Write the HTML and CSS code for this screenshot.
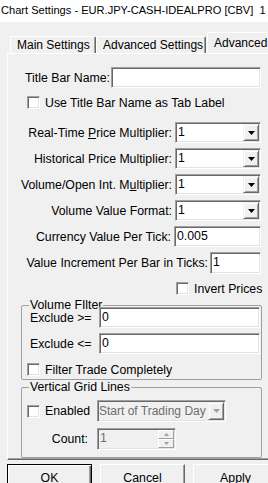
FILE: index.html
```html
<!DOCTYPE html>
<html lang="en">
<head>
    <meta charset="UTF-8">
    <meta name="viewport" content="width=device-width, initial-scale=1.0">
    <title>Chart Settings</title>
    <link rel="stylesheet" href="styles.css">
</head>
<body>
    <div class="titlebar">Chart Settings - EUR.JPY-CASH-IDEALPRO [CBV]&nbsp; 1</div>

    <div class="tabs">
        <div class="tab tab-main">Main Settings</div>
        <div class="tab tab-adv">Advanced Settings</div>
        <div class="tab active">Advanced</div>
    </div>

    <div class="panel">
        <div class="row r-title">
            <label>Title Bar Name:</label>
            <div class="edit w-title"></div>
        </div>
        <div class="check c-tab"><span class="box"></span>Use Title Bar Name as Tab Label</div>

        <div class="row r-first">
            <label>Real-Time <u>P</u>rice Multiplier:</label>
            <div class="combo"><span class="val">1</span><span class="drop"><svg width="7" height="4" viewBox="0 0 7 4"><polygon points="0,0 7,0 3.5,4"/></svg></span></div>
        </div>
        <div class="row">
            <label>Historical Price Multiplier:</label>
            <div class="combo"><span class="val">1</span><span class="drop"><svg width="7" height="4" viewBox="0 0 7 4"><polygon points="0,0 7,0 3.5,4"/></svg></span></div>
        </div>
        <div class="row">
            <label>Volume/Open Int. M<u>u</u>ltiplier:</label>
            <div class="combo"><span class="val">1</span><span class="drop"><svg width="7" height="4" viewBox="0 0 7 4"><polygon points="0,0 7,0 3.5,4"/></svg></span></div>
        </div>
        <div class="row">
            <label>Volume Value Format:</label>
            <div class="combo"><span class="val">1</span><span class="drop"><svg width="7" height="4" viewBox="0 0 7 4"><polygon points="0,0 7,0 3.5,4"/></svg></span></div>
        </div>
        <div class="row">
            <label>Currency Value Per Tick:</label>
            <div class="edit w-tick">0.005</div>
        </div>
        <div class="row r-incr">
            <label>Value Increment Per Bar in Ticks:</label>
            <div class="edit w-incr">1</div>
        </div>
        <div class="check c-invert"><span class="box"></span>Invert Prices</div>

        <fieldset class="group g-volume">
            <legend>Volume FIlter</legend>
            <div class="frow f-first">
                <label class="flabel">Exclude &gt;=</label>
                <div class="edit w-excl">0</div>
            </div>
            <div class="frow">
                <label class="flabel">Exclude &lt;=</label>
                <div class="edit w-excl">0</div>
            </div>
            <div class="check c-filter"><span class="box"></span>Filter Trade Completely</div>
        </fieldset>

        <fieldset class="group g-grid">
            <legend>Vertical Grid Lines</legend>
            <div class="frow f-enabled">
                <span class="box"></span>
                <span class="enabled-label">Enabled</span>
                <div class="combo disabled w-start"><span class="val">Start of Trading Day</span><span class="drop"><svg width="7" height="4" viewBox="0 0 7 4"><polygon points="0,0 7,0 3.5,4"/></svg></span></div>
            </div>
            <div class="frow f-count">
                <label class="count-label">Count:</label>
                <div class="spin">
                    <span class="val">1</span>
                    <span class="spin-btns">
                        <span class="spin-btn"><svg width="5" height="3" viewBox="0 0 5 3"><polygon points="2.5,0 5,3 0,3"/></svg></span>
                        <span class="spin-btn"><svg width="5" height="3" viewBox="0 0 5 3"><polygon points="0,0 5,0 2.5,3"/></svg></span>
                    </span>
                </div>
            </div>
        </fieldset>
    </div>

    <div class="buttons">
        <button class="default">OK</button>
        <button>Cancel</button>
        <button>Apply</button>
    </div>
</body>
</html>
```

FILE: styles.css
```css
body {
    margin: 0;
    background: #f0f0f0;
    font-family: "Liberation Sans", Arial, sans-serif;
    font-size: 12px;
    color: #000;
    overflow: hidden;
}
.titlebar {
    height: 22px;
    line-height: 20px;
    padding-left: 1px;
    font-size: 11.1px;
    background: #fff;
    white-space: nowrap;
}

/* tab strip */
.tabs {
    display: flex;
    align-items: flex-end;
    height: 31px;
    padding-left: 10px;
    white-space: nowrap;
    overflow: hidden;
}
.tab {
    box-sizing: border-box;
    height: 17px;
    line-height: 16px;
    padding-left: 6px;
    border-top: 1px solid #fff;
    border-left: 1px solid #fff;
    border-right: 1px solid #696969;
    box-shadow: inset -1px 0 #a0a0a0;
    border-radius: 2px 2px 0 0;
}
.tab-main {
    width: 86px;
}
.tab-adv {
    width: 110px;
}
.tab.active {
    position: relative;
    flex: 1;
    height: 22px;
    line-height: 20px;
    margin-left: 1px;
    margin-bottom: -1px;
    padding-left: 6px;
    border-right: none;
    box-shadow: none;
    background: #f0f0f0;
}

/* page of the tab */
.panel {
    margin-left: 7px;
    padding-top: 13px;
    padding-bottom: 1px;
    font-size: 12.3px;
    border-top: 1px solid #fff;
    border-left: 1px solid #fff;
    border-bottom: 1px solid #696969;
    box-shadow: inset 0 -1px #a0a0a0;
}
.row {
    display: flex;
    align-items: center;
    justify-content: flex-end;
    height: 21px;
    margin-top: 5px;
    padding-right: 7px;
}
.row label {
    margin-right: 3px;
    white-space: nowrap;
}
.r-title {
    margin-top: 0;
}
.r-title label {
    margin-right: 1px;
}
.r-first {
    margin-top: 13px;
}
.r-incr {
    height: 22px;
}
.r-incr label {
    margin-right: 2px;
}

/* sunken controls */
.edit, .combo, .spin, .box {
    box-sizing: border-box;
    background: #fff;
    border: 1px solid;
    border-color: #a0a0a0 #fff #fff #a0a0a0;
    box-shadow: inset 1px 1px #696969, inset -1px -1px #e3e3e3;
}
.edit {
    height: 100%;
    line-height: 19px;
    padding-left: 2px;
}
.w-title {
    width: 150px;
}
.w-tick {
    width: 87px;
}
.w-incr {
    width: 51px;
}
.w-excl {
    width: 161px;
    height: 21px;
}
.combo {
    display: flex;
    width: 86px;
    height: 100%;
}
.combo .val, .spin .val {
    flex: 1;
    line-height: 19px;
    padding-left: 2px;
    white-space: nowrap;
    overflow: hidden;
}
.drop {
    box-sizing: border-box;
    display: flex;
    align-items: center;
    justify-content: center;
    width: 16px;
    margin: 1px;
    background: #f0f0f0;
    border: 1px solid;
    border-color: #f0f0f0 #696969 #696969 #f0f0f0;
    box-shadow: inset 1px 1px #fff, inset -1px -1px #a0a0a0;
}
.drop svg {
    fill: #000;
}
.combo.disabled {
    background: #f0f0f0;
    color: #6d6d6d;
}
.combo.disabled .val {
    padding-left: 1px;
    font-size: 12px;
    line-height: 20px;
}
.combo.disabled .drop svg {
    fill: #a0a0a0;
}
.w-start {
    width: 129px;
    height: 22px;
}

/* check boxes */
.check {
    display: flex;
    align-items: center;
    height: 13px;
    white-space: nowrap;
}
.box {
    display: inline-block;
    flex: none;
    width: 13px;
    height: 13px;
    margin-right: 5px;
}
.c-tab {
    margin-top: 8px;
    padding-left: 19px;
}
.c-invert {
    margin-top: 8px;
    padding-left: 168px;
}
.c-filter {
    margin-top: 9px;
    padding-left: 5px;
}

/* group boxes */
.group {
    margin: 0 6px 0 13px;
    padding: 0;
    border: 1px solid #a0a0a0;
    border-radius: 2px;
}
.group legend {
    margin-left: 7px;
    padding: 0 1px;
    line-height: 14px;
}
.g-volume {
    margin-top: 3px;
    padding-bottom: 3px;
}
.g-grid {
    padding-bottom: 7px;
}
.frow {
    display: flex;
    align-items: center;
    height: 21px;
    margin-top: 5px;
    padding-left: 8px;
}
.f-first {
    margin-top: -5px;
}
.flabel {
    width: 69px;
}
.f-enabled {
    height: 22px;
    margin-top: 6px;
    padding-left: 5px;
}
.enabled-label {
    width: 52px;
}
.f-count {
    height: 22px;
    margin-top: 6px;
    padding-left: 0;
}
.count-label {
    width: 66px;
    margin-right: 9px;
    text-align: right;
}
.spin {
    display: flex;
    width: 79px;
    height: 22px;
    background: #f0f0f0;
    color: #6d6d6d;
}
.spin-btns {
    display: flex;
    flex-direction: column;
    width: 16px;
    margin: 1px;
}
.spin-btn {
    box-sizing: border-box;
    flex: 1;
    display: flex;
    align-items: center;
    justify-content: center;
    background: #f0f0f0;
    border: 1px solid;
    border-color: #fff #a0a0a0 #a0a0a0 #fff;
}
.spin-btn svg {
    fill: #a0a0a0;
}

/* dialog buttons */
.buttons {
    display: flex;
    gap: 8px;
    margin-top: 4px;
    padding-left: 7px;
}
button {
    box-sizing: border-box;
    flex: none;
    width: 85px;
    height: 28px;
    padding: 0 0 1px;
    font-family: "Liberation Sans", Arial, sans-serif;
    font-size: 12.3px;
    color: #000;
    background: #f0f0f0;
    border: 1px solid;
    border-color: #fff #696969 #696969 #fff;
    box-shadow: inset -1px -1px #a0a0a0;
}
button.default {
    border-color: #000;
    box-shadow: inset 1px 1px #fff, inset -1px -1px #696969, inset -2px -2px #a0a0a0;
}
```
